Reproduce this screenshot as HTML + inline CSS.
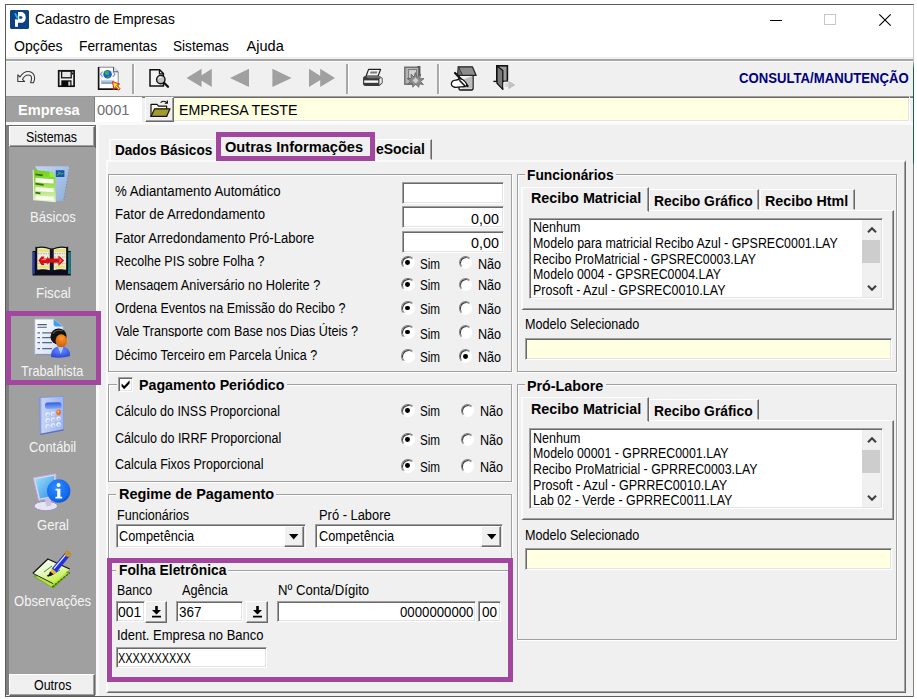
<!DOCTYPE html>
<html lang="pt-BR"><head><meta charset="utf-8"><title>Cadastro de Empresas</title>
<style>
html,body{margin:0;padding:0;background:#fff;}
#root{position:relative;width:917px;height:699px;overflow:hidden;background:#fff;font-family:"Liberation Sans",sans-serif;color:#000;font-size:13px}
#root div,#root span.t,#root svg{position:absolute;box-sizing:border-box}
.t{white-space:nowrap;transform-origin:0 0;display:block}
.clip{overflow:hidden}
.sunk{border:1px solid;border-color:#a0a0a0 #fff #fff #a0a0a0;box-shadow:inset 1px 1px 0 #696969,inset -1px -1px 0 #e3e3e3;background:#fff}
.sunk.y{background:#ffffe1}
.btn{border:1px solid;border-color:#fff #696969 #696969 #fff;box-shadow:inset -1px -1px 0 #a0a0a0;background:#f0f0f0}
.gb{border:1px solid #a0a0a0;box-shadow:1px 1px 0 #fff,inset 1px 1px 0 #fff}
.cap{background:#f0f0f0}
.purple{border:5px solid #a2469f}
.radio{border-radius:50%;background:#fff;border:1px solid;border-color:#808080 #fff #fff #808080;box-shadow:inset 1px 1px 0 #404040;transform:rotate(0deg)}
.radio.on::after{content:"";position:absolute;left:3.4px;top:3.4px;width:4.8px;height:4.8px;border-radius:50%;background:#000}
.tab{border:1px solid;border-color:#fff #696969 transparent #fff;box-shadow:inset -1px 0 0 #a0a0a0;background:#f0f0f0}

</style></head>
<body>
<div id="root">
<div style="left:5px;top:4px;width:909px;height:693px;border:1px solid #5c5c5c;border-right-color:#b9b9b9;background:#fff"></div>
<div style="left:913px;top:5px;width:1px;height:691px;background:linear-gradient(#c4c4c4 0,#c4c4c4 56px,#1c5c50 64px,#1c5c50 157px,#7c7c7c 160px,#7c7c7c 272px,#8c7c76 276px,#8c7c76 100%)"></div>
<div style="left:6px;top:57.4px;width:907px;height:638.6px;background:#f0f0f0"></div>
<div style="left:6px;top:59px;width:907px;height:1.9px;background:#a6a6a6"></div>
<div style="left:6px;top:60.9px;width:907px;height:1.2px;background:#fdfdfd"></div>
<svg style="left:10px;top:10px" width="19" height="19" viewBox="0 0 19 19"><path d="M1 0H18L19 1V18L18 19H1L0 18V1Z" fill="#0e4183"/><path d="M8 2H11C14.2 2 15.7 4.6 15.7 7.4C15.7 10.2 14.2 12.8 11 12.8H8V16.7H5V9.3H8Z M9.2 6.2H11.4C13 6.2 13 8.7 11.4 8.7H9.2Z" fill="#fff" fill-rule="evenodd"/><path d="M4.1 3.4L5.8 3L8.6 8L6.8 9Z" fill="#19b4f2"/><path d="M6.6 8.9L8 8.2V9.3H6.6Z" fill="#0a2f6a"/></svg>
<span id="t0" class="t" style="left:34.7px;top:12.03px;font-size:14.53px;line-height:14.53px;transform:scaleX(0.9412);">Cadastro de Empresas</span>
<div style="left:770px;top:20px;width:12px;height:1px;background:#000"></div>
<div style="left:824px;top:14px;width:12px;height:11px;border:1px solid #c8c8c8"></div>
<svg style="left:878px;top:13px" width="14" height="14" viewBox="0 0 14 14"><path d="M1.3 1.3L12.7 12.7M12.7 1.3L1.3 12.7" stroke="#000" stroke-width="1.15" fill="none"/></svg>
<span id="t1" class="t" style="left:14.2px;top:39.03px;font-size:14.53px;line-height:14.53px;transform:scaleX(0.9720);">Opções</span>
<span id="t2" class="t" style="left:79.1px;top:39.03px;font-size:14.53px;line-height:14.53px;transform:scaleX(0.9500);">Ferramentas</span>
<span id="t3" class="t" style="left:173.4px;top:39.03px;font-size:14.53px;line-height:14.53px;transform:scaleX(0.9367);">Sistemas</span>
<span id="t4" class="t" style="left:246.6px;top:39.03px;font-size:14.53px;line-height:14.53px;transform:scaleX(1.0000);">Ajuda</span>
<div style="left:132.1px;top:63.6px;width:2px;height:30.6px;background:#a8a8a8"></div>
<div style="left:134.1px;top:63.6px;width:1px;height:30.6px;background:#fdfdfd"></div>
<div style="left:346.1px;top:63.6px;width:2px;height:30.6px;background:#a8a8a8"></div>
<div style="left:348.1px;top:63.6px;width:1px;height:30.6px;background:#fdfdfd"></div>
<div style="left:437.1px;top:63.6px;width:2px;height:30.6px;background:#a8a8a8"></div>
<div style="left:439.1px;top:63.6px;width:1px;height:30.6px;background:#fdfdfd"></div>
<span id="t5" class="t" style="left:739.2px;top:72.03px;font-size:13.81px;line-height:13.81px;font-weight:bold;color:#000080;transform:scaleX(0.9528);">CONSULTA/MANUTENÇÃO</span>
<svg style="left:0;top:0" width="917" height="699" viewBox="0 0 917 699"><path d="M17.2 74.4V81.6H24.4L22.2 79.4C23.5 76.5 26 74.6 28.5 74.6C30.8 74.6 32 76.4 32 78.2C32 80 31.5 81.5 31 83H34C34.8 81.3 35.3 79.8 35.3 77.8C35.3 73.8 32.5 70.8 28.5 70.8C24.8 70.8 21.6 73.4 19.6 76.8Z" fill="#f6f6f6" stroke="#3a3a3a" stroke-width="1.2" stroke-linejoin="round" transform="translate(26 77.2) scale(.93) translate(-26 -77)"/><rect x="58.7" y="70.8" width="15.4" height="15.4" fill="#efefef" stroke="#111" stroke-width="1.7"/><rect x="61.6" y="71.2" width="9.6" height="6.6" fill="#e6e6e6" stroke="#111" stroke-width="1.3"/><rect x="61.3" y="80.3" width="10.2" height="6.2" fill="#0a0a0a"/><rect x="68.3" y="81.6" width="2" height="4" fill="#d8d8d8"/><rect x="72" y="72.5" width="1.2" height="2" fill="#111"/><path d="M98.6 67.2H113.5L118.2 71.8V88.6H98.6Z" fill="#fcfcfc" stroke="#8a8a8a" stroke-width="1"/><path d="M98.6 67V89.2H118.6" fill="none" stroke="#111" stroke-width="1.6"/><path d="M113.5 67.2V71.8H118.2" fill="#d8e4f4" stroke="#555" stroke-width="1"/><circle cx="107.6" cy="74.2" r="4.3" fill="#1f5fcf"/><path d="M104.6 72.4C105.6 70.6 107.6 70.2 109 71.2C108.4 72.8 109.8 73.6 108.8 75C107.6 74.4 106.2 75.6 105.4 74.6Z" fill="#37b24a"/><path d="M107.4 76.2C108.6 75.8 110.2 76.4 110.4 77.2C109.4 78.2 108 78.4 107 78Z" fill="#2e9c40"/><path d="M102.6 71.6L100.4 74.2L102.6 76.8M112.8 71.6L115 74.2L112.8 76.8" fill="none" stroke="#7f90e6" stroke-width="1.1"/><rect x="101.2" y="80.6" width="13" height="3.4" fill="#8ea8cc"/><rect x="101.2" y="80.6" width="13" height="1.2" fill="#b9c9e0"/><path d="M112.4 81.6L119.6 84L116.8 85.4L120.2 88.8L118.8 90.2L115.4 86.8L114 89.6Z" fill="#ffe21a" stroke="#d8261c" stroke-width="1" stroke-linejoin="round"/><path d="M150 69.8H159.6L163.4 73.6V86H150Z" fill="#f4f4f4" stroke="#111" stroke-width="1.5" stroke-linejoin="miter"/><path d="M159.4 70V73.8H163.2" fill="none" stroke="#111" stroke-width="1.2"/><circle cx="160.8" cy="79.6" r="4.2" fill="#c4c4c4" stroke="#111" stroke-width="1.4"/><path d="M158.6 78.6A2.4 2.4 0 0 1 161.6 77.2" fill="none" stroke="#fff" stroke-width="1"/><path d="M164 82.8L168 86.8" stroke="#111" stroke-width="2.3" stroke-linecap="round"/><path d="M186.6 78L201.6 68.8V86.9Z M197.4 78L211.8 68.8V86.9Z" fill="#a0a0a0"/><path d="M230 78L249 68.8V86.9Z" fill="#a0a0a0"/><path d="M291.6 78L272.4 68.8V86.9Z" fill="#a0a0a0"/><path d="M323.6 78L309 68.8V86.9Z M335 78L320.2 68.8V86.9Z" fill="#a0a0a0"/><path d="M368.6 69.4H380.6L378 76.2H366Z" fill="#f4f4f4" stroke="#222" stroke-width="1.2" stroke-linejoin="round"/><path d="M370.6 71.4H377.4L376.7 73.4H369.9Z" fill="#7a7a7a"/><path d="M365.4 76H379.4L382.6 78.2V83L379.4 86H365.4C364 86 363 85 363 83.6V78.4C363 77 364 76 365.4 76Z" fill="#3a3a3a"/><path d="M364.2 80.4H378.2V82.8H364.2Z" fill="#fdfdfd"/><path d="M379.4 78.8L381.8 77.4V82.6L379.4 85Z" fill="#e8e8e8"/><path d="M365.4 76H379.4L382.6 78.2H368Z" fill="#6e6e6e"/><rect x="404.8" y="67.2" width="14" height="17" fill="#b4b4b4" stroke="#6a6a6a" stroke-width="1.4"/><rect x="408.6" y="69.6" width="8" height="9" fill="#d4d4d4" stroke="#7a7a7a" stroke-width="1"/><path d="M417.4 66.8H419.6V76" stroke="#555" stroke-width="1.6" fill="none"/><path d="M415.4 72.6L417 77.4L420.6 74.2L419.8 78.8L424 78.6L420.6 81.4L423.4 84.6L419.2 83.8L418.8 87.2L415.6 84.2L412.8 87.2L412.2 83.2L408 84.4L410.6 80.8L407.2 78.6L411.4 78.2L411 74.2L414 77Z" fill="#8f8f8f" stroke="#5e5e5e" stroke-width=".8"/><path d="M412.6 80.4L415.6 77.4L418.4 80.6L415.8 83.6Z" fill="#d0d0d0"/><path d="M459 74.6H473V88.4C473 89.4 472.4 90 471.4 90H460.6C459.6 90 459 89.4 459 88.4Z" fill="#f2f2f2" stroke="#111" stroke-width="1.4"/><path d="M462 80L472.4 76V88.6H462Z" fill="#bcbcbc"/><path d="M458.2 66.8H472.4L476.2 75.4H462.4Z" fill="#8c8c8c" stroke="#222" stroke-width="1.2" stroke-linejoin="round"/><path d="M458.2 66.8L457.4 75.4L462.4 75.4" fill="#6a6a6a" stroke="#222" stroke-width="1"/><path d="M455 73L467.6 86" stroke="#111" stroke-width="2.2" stroke-linecap="round"/><path d="M452.4 81.2C454 79.6 457 80.4 458.6 79.4C460.6 78.4 463 79.4 464.8 81.4C466.4 83 467.6 85 466 86.2C463.6 87.4 459.6 86.6 457.4 87.2C455 87.8 451.6 86.8 451.4 84.4C451.2 83 451.4 82.2 452.4 81.2Z" fill="#fff" stroke="#111" stroke-width="1.3"/><path d="M459.4 80.2L465 86" stroke="#111" stroke-width="1.6"/><rect x="496.8" y="65.8" width="10.6" height="15.6" fill="#9a9a9a" stroke="#111" stroke-width="1.6"/><path d="M497 66L502.8 70.6V89.4L497 83.2Z" fill="#7a7a7a" stroke="#111" stroke-width="1.3" stroke-linejoin="round"/><path d="M493.4 81.4H497.2" stroke="#111" stroke-width="1.4"/><path d="M504 82.2H508.4V80.6L515.6 85L508.4 89.6V87.8H504Z" fill="#dcdcdc" stroke="#fafafa" stroke-width="1"/><path d="M508.4 80.6L515.6 85L508.4 89.6" fill="#c2c2c2"/></svg>
<div style="left:6px;top:95.6px;width:907px;height:2px;background:linear-gradient(#a0a0a0,#6e6e6e)"></div>
<div style="left:6px;top:97px;width:88px;height:25px;background:#a0a0a0"></div>
<span id="t6" class="t" style="left:17.6px;top:103.03px;font-size:14.39px;line-height:14.39px;font-weight:bold;color:#fff;transform:scaleX(1.0148);">Empresa</span>
<div style="left:94px;top:97px;width:48px;height:25px;background:#fff;border-left:1px solid #808080"></div>
<span id="t7" class="t" style="left:96.6px;top:103.03px;font-size:14.53px;line-height:14.53px;color:#6d6d78;transform:scaleX(1.0063);">0001</span>
<div class="sunk y" style="left:171px;top:95.6px;width:738.6px;height:26.6px;"></div>
<div class="btn" style="left:145px;top:97px;width:29px;height:25px;"></div>
<svg style="left:0;top:0" width="917" height="699" viewBox="0 0 917 699"><path d="M151 104.4H157L158.6 106.2H166.6V116.4H151Z" fill="#fdfde8" stroke="#111" stroke-width="1.2" stroke-linejoin="round"/><path d="M151 116.4L154.6 108.8H170L166.6 116.4Z" fill="#a39a2a" stroke="#111" stroke-width="1.2" stroke-linejoin="round"/><path d="M160.6 102.6C162.6 100.8 165.4 100.8 167.2 102.8M167.4 100.6V103.2H164.8" fill="none" stroke="#111" stroke-width="1.1"/></svg>
<span id="t8" class="t" style="left:179.0px;top:104.02px;font-size:13.95px;line-height:13.95px;transform:scaleX(1.0224);">EMPRESA TESTE</span>
<div style="left:6px;top:122px;width:907px;height:3px;background:#fafafa"></div>
<div style="left:6px;top:125px;width:90px;height:570px;background:#a0a0a0;border-left:3px solid #808080;border-top:1px solid #696969"></div>
<div style="left:95px;top:125px;width:1px;height:23px;background:#696969"></div>
<div style="left:96px;top:125px;width:3px;height:571px;background:#fafafa"></div>
<div class="btn" style="left:9px;top:126px;width:86px;height:21px;"></div>
<span id="t9" class="t" style="left:26.3px;top:130.02px;font-size:14.97px;line-height:14.97px;transform:scaleX(0.8290);">Sistemas</span>
<div class="btn" style="left:9px;top:674px;width:86px;height:22px;"></div>
<span id="t10" class="t" style="left:34.2px;top:677.03px;font-size:15.41px;line-height:15.41px;transform:scaleX(0.8087);">Outros</span>
<span id="t11" class="t" style="left:29.7px;top:209.03px;font-size:15.41px;line-height:15.41px;color:#f4f4f4;transform:scaleX(0.8500);">Básicos</span>
<span id="t12" class="t" style="left:35.6px;top:285.03px;font-size:15.41px;line-height:15.41px;color:#f4f4f4;transform:scaleX(0.8650);">Fiscal</span>
<span id="t13" class="t" style="left:21.2px;top:363.03px;font-size:15.41px;line-height:15.41px;color:#f4f4f4;transform:scaleX(0.8224);">Trabalhista</span>
<span id="t14" class="t" style="left:28.5px;top:439.03px;font-size:15.41px;line-height:15.41px;color:#f4f4f4;transform:scaleX(0.8351);">Contábil</span>
<span id="t15" class="t" style="left:36.8px;top:517.03px;font-size:15.41px;line-height:15.41px;color:#f4f4f4;transform:scaleX(0.8500);">Geral</span>
<span id="t16" class="t" style="left:14.3px;top:593.03px;font-size:15.41px;line-height:15.41px;color:#f4f4f4;transform:scaleX(0.8484);">Observações</span>
<svg style="left:0;top:0" width="917" height="699" viewBox="0 0 917 699"><defs>
<linearGradient id="gGreen" x1="0" y1="0" x2="0" y2="1"><stop offset="0" stop-color="#6fd019"/><stop offset=".45" stop-color="#9be04a"/><stop offset="1" stop-color="#e6f6cf"/></linearGradient>
<linearGradient id="gBlueSheet" x1="0" y1="0" x2="1" y2="1"><stop offset="0" stop-color="#c2d6f0"/><stop offset="1" stop-color="#8eaedb"/></linearGradient>
<linearGradient id="gDoc" x1="0" y1="0" x2="1" y2="1"><stop offset="0" stop-color="#ffffff"/><stop offset="1" stop-color="#cfdcf6"/></linearGradient>
<linearGradient id="gCalc" x1="0" y1="0" x2="1" y2="0"><stop offset="0" stop-color="#6f8fe0"/><stop offset=".12" stop-color="#c4d2f6"/><stop offset="1" stop-color="#9db3ee"/></linearGradient>
<linearGradient id="gDisp" x1="0" y1="0" x2="0" y2="1"><stop offset="0" stop-color="#2f62e0"/><stop offset="1" stop-color="#86a8f4"/></linearGradient>
<linearGradient id="gScreen" x1="0" y1="0" x2="1" y2="1"><stop offset="0" stop-color="#9fe0fa"/><stop offset="1" stop-color="#2f8fe6"/></linearGradient>
<radialGradient id="gInfo" cx=".4" cy=".35" r=".7"><stop offset="0" stop-color="#2f8cff"/><stop offset=".8" stop-color="#0f68ee"/><stop offset="1" stop-color="#0a4fc4"/></radialGradient>
<radialGradient id="gFace" cx=".55" cy=".3" r=".8"><stop offset="0" stop-color="#ff9a2a"/><stop offset="1" stop-color="#c2500a"/></radialGradient>
<radialGradient id="gBody" cx=".5" cy=".3" r=".8"><stop offset="0" stop-color="#6f8cff"/><stop offset="1" stop-color="#2140d8"/></radialGradient>
<linearGradient id="gPaper" x1="0" y1="0" x2=".6" y2="1"><stop offset="0" stop-color="#ffffff"/><stop offset=".55" stop-color="#e6f7c4"/><stop offset="1" stop-color="#c4ee2a"/></linearGradient>
</defs><path d="M35 166.2H69.7L63.6 200.9H56Z" fill="url(#gBlueSheet)"/><path d="M69.7 166.2L63.6 200.9" stroke="#7d8fa8" stroke-width="1" stroke-dasharray="1.5 1.5"/><rect x="55.8" y="170.2" width="8.6" height="6.8" fill="#1c4fb4"/><path d="M57 175.6C58.4 173 59.4 175 60.6 172.2M60.4 174.4L63.4 173.2M58.2 171.8L59.6 173.6" stroke="#39b24a" stroke-width="1.1" fill="none"/><path d="M33.2 169.8L49.6 171.8C53 172.6 55 174.6 55.2 177.6L55.8 202.3L33.8 200.2Z" fill="url(#gGreen)"/><path d="M49.6 171.8C53 172.6 55 174.6 55.2 177.6C53.4 176.6 51 176.6 49.4 177Z" fill="#8ff23a"/><path d="M33.2 169.8L33.8 200.2" stroke="#eaf6dc" stroke-width="1"/><rect x="35.6" y="178.2" width="18" height="4.2" fill="#fbfff4" transform="skewY(4) translate(0,-2.6)"/><rect x="35.6" y="187" width="18" height="4" fill="#f6fcec" transform="skewY(4) translate(0,-2.6)"/><rect x="35.6" y="195.6" width="18" height="4" fill="#f8fcf0" transform="skewY(4) translate(0,-2.6)"/><path d="M35.4 174.4L42.8 175.4M35.4 183.6L43.6 184.8M35.4 192.6L40.4 193.4" stroke="#3c6a14" stroke-width="1.7"/><path d="M32.6 251H70.8V275.6H32.6Z" fill="#0c0c1c"/><rect x="32.6" y="252" width="2.2" height="22" fill="#2b3fa6"/><rect x="68" y="252" width="2.8" height="22" fill="#1f7c84"/><path d="M35.4 246.4L37 247.4V270.4H35.4Z M68.2 246.2L66.6 247.4V270.4H68.2Z" fill="#111"/><path d="M36.6 247.6C41 246.8 46 247 50.4 249V271C46 269.6 41 269.6 36.6 270.4Z" fill="#ecebdc" stroke="#111" stroke-width="1.3"/><path d="M66.8 247.6C62.4 246.8 57.4 247 53 249V271C57.4 269.6 62.4 269.6 66.8 270.4Z" fill="#ecebdc" stroke="#111" stroke-width="1.3"/><path d="M38 250.6H49M38 267H49M54.4 250.6H65.4M54.4 267H65.4" stroke="#e9e56c" stroke-width="2.6"/><path d="M38 253.6H49M54.4 253.6H65.4M54.4 257H65.4M54.4 263.6H65.4M38 263.6H49" stroke="#a8a8b8" stroke-width=".9" stroke-dasharray="1.5 1"/><path d="M50.2 248.4H53.2V271.6H50.2Z" fill="#14142a"/><path d="M38.4 260.6L41.4 256.4H44.4L43.4 258.4H47.2V256.6L49 258.6H58.4V255.4L64.2 260.6L58.4 266V262.8H49L47.2 264.8V263H43.4L44.4 265H41.4Z" fill="#d41010"/><path d="M59.4 258V263.4L62 260.6Z" fill="#ff6a50"/><path d="M41.6 259.6H46" stroke="#ff8c78" stroke-width="1"/><path d="M35 319.2H53.6L62.9 326.4V354.2H35Z" fill="url(#gDoc)" stroke="#c4cde4" stroke-width=".8"/><path d="M35.6 354.6H62.6" stroke="#8a93ac" stroke-width="1.2"/><path d="M53.6 319.2L62.9 326.4H56C54.4 326.4 53.6 325.6 53.6 324Z" fill="#3c9ff2"/><path d="M37.5 324.6H46.8M37.5 327.2H46.8" stroke="#4c5d7c" stroke-width="1.1"/><path d="M37.5 332.8H40M42.2 332.8H52M37.5 337.6H40M42.2 337.6H52M37.5 342.6H40M42.2 342.6H52M37.5 348.6H40M42.2 348.6H52" stroke="#56678a" stroke-width="1.3"/><path d="M51.2 357C50.6 351.6 53 348 57.6 346.6H63.6C68.2 348 70.6 351.6 70 356C64 358 57 358 51.2 357Z" fill="url(#gBody)"/><path d="M57.8 346.6L60.8 354L63.6 346.6Z" fill="#a8d4ff"/><circle cx="58.6" cy="336.6" r="8.1" fill="#121212"/><path d="M53 333.6C55 330.6 59 329.6 62.4 330.8" stroke="#5a5a5a" stroke-width="1.2" fill="none"/><ellipse cx="61.2" cy="340.8" rx="5.7" ry="6.5" fill="url(#gFace)"/><path d="M66.6 336.6C67.8 337.6 67.8 341 66.8 342.4" stroke="#f0a040" stroke-width="1" fill="none"/><path d="M39.3 397.6L63.6 396.4V429.8L40.4 434.4Z" fill="url(#gCalc)" stroke="#7f96d8" stroke-width=".8" stroke-linejoin="round"/><path d="M40.4 434.4L63.6 429.8" stroke="#5a70b8" stroke-width="1.2"/><rect x="45" y="402.4" width="16.6" height="6.4" rx="2.6" fill="url(#gDisp)" transform="rotate(-2 53 405)"/><circle cx="47.6" cy="414.6" r="2.3" fill="#e4ecfc"/><circle cx="48.1" cy="415.3" r="1.4" fill="#b4c6f2"/><circle cx="53" cy="413.70000000000005" r="2.3" fill="#e4ecfc"/><circle cx="53.5" cy="414.40000000000003" r="1.4" fill="#b4c6f2"/><ellipse cx="58.6" cy="412.40000000000003" rx="2.3" ry="2.8" fill="#ec7412"/><ellipse cx="58.2" cy="411.6" rx="1" ry="1.1" fill="#ffb878"/><circle cx="47.6" cy="420.4" r="2.3" fill="#e4ecfc"/><circle cx="48.1" cy="421.09999999999997" r="1.4" fill="#b4c6f2"/><circle cx="53" cy="419.5" r="2.3" fill="#e4ecfc"/><circle cx="53.5" cy="420.2" r="1.4" fill="#b4c6f2"/><circle cx="58.6" cy="418.59999999999997" r="2.3" fill="#e4ecfc"/><circle cx="59.1" cy="419.29999999999995" r="1.4" fill="#b4c6f2"/><circle cx="47.6" cy="426.2" r="2.3" fill="#e4ecfc"/><circle cx="48.1" cy="426.9" r="1.4" fill="#b4c6f2"/><circle cx="53" cy="425.3" r="2.3" fill="#e4ecfc"/><circle cx="53.5" cy="426.0" r="1.4" fill="#b4c6f2"/><circle cx="58.6" cy="424.4" r="2.3" fill="#e4ecfc"/><circle cx="59.1" cy="425.09999999999997" r="1.4" fill="#b4c6f2"/><ellipse cx="45.8" cy="506" rx="11.8" ry="4.7" fill="#e6e6ee" stroke="#9a92c8" stroke-width="1"/><path d="M44 497L50 495.6L51.6 505.6L46.6 506.6Z" fill="#c9c2ea"/><path d="M33.2 477.8L55.8 473.8L56.6 497L38.6 500.4Z" fill="#dcd6f2" stroke="#b4acd8" stroke-width=".8" stroke-linejoin="round"/><path d="M35.4 479.2L54.2 475.8L54.9 495.6L39.9 498.4Z" fill="url(#gScreen)"/><circle cx="58.7" cy="491" r="11.7" fill="url(#gInfo)"/><circle cx="58.6" cy="485" r="2" fill="#fff"/><path d="M55.6 488.8H60.4V496.8H62.2V498.6H55.4V496.8H57.2V490.6H55.6Z" fill="#fff"/><path d="M33.6 576.4L48 562L69.8 572.6L53.6 588.4Z" fill="#6aa81c"/><path d="M36 577L48 565L68 573.6L52 587Z" fill="#b4e24a"/><path d="M52 587L69.8 572.6" stroke="#3c6c08" stroke-width="1.4" stroke-dasharray="2.4 1.2"/><path d="M32.9 573.3L47.9 559L69.7 569L53.3 583.7Z" fill="url(#gPaper)"/><path d="M32.9 573.3L47.9 559L69.7 569" fill="none" stroke="#111" stroke-width="1.2" stroke-linejoin="round"/><path d="M32.9 573.3L53.3 583.7" stroke="#2c2c1c" stroke-width="1"/><path d="M44 572L52 566M50 576L60 570" stroke="#4c8a2a" stroke-width="1"/><path d="M51.8 568.6L65.6 552.2L70 555.8L56.4 572.4Z" fill="#2230e2"/><path d="M54 568.6L66.6 553.6" stroke="#e8ecff" stroke-width="1.3"/><path d="M51.8 568.6L56.4 572.4L49.4 575.4Z" fill="#f0b428"/><path d="M49.4 575.4L50.4 572.6L52.2 574.2Z M47.4 576L50.6 574.4" fill="#111" stroke="#111" stroke-width="1.6"/><ellipse cx="67.8" cy="554" rx="2.9" ry="2.4" fill="#d8a01a" stroke="#b8860e" stroke-width=".8" transform="rotate(38 67.8 554)"/><ellipse cx="68" cy="553.8" rx="1.3" ry="1" fill="#8a8a9c" transform="rotate(38 68 553.8)"/></svg>
<div class="purple" style="left:6px;top:311px;width:95px;height:74px;"></div>
<div style="left:106.2px;top:159.6px;width:799.8px;height:533.4px;border:1px solid;border-width:2px 1px 1px 2px;border-color:#fbfbfb #696969 #696969 #fbfbfb;box-shadow:inset -1px -1px 0 #a0a0a0;background:#f0f0f0"></div>
<div style="left:109px;top:139px;width:108px;height:21px;border:1px solid;border-width:1px 1px 1px 2px;border-color:#fff transparent transparent #fbfbfb;background:#f0f0f0"></div>
<div class="tab" style="left:376px;top:139px;width:56px;height:21px;"></div>
<div style="left:218px;top:135px;width:156px;height:26px;background:#f0f0f0"></div>
<span id="t17" class="t" style="left:115.2px;top:143.02px;font-size:14.24px;line-height:14.24px;font-weight:bold;transform:scaleX(0.9529);">Dados Básicos</span>
<span id="t18" class="t" style="left:225.0px;top:140.02px;font-size:14.24px;line-height:14.24px;font-weight:bold;transform:scaleX(1.0269);">Outras Informações</span>
<span id="t19" class="t" style="left:376.2px;top:142.02px;font-size:14.24px;line-height:14.24px;font-weight:bold;transform:scaleX(0.9800);">eSocial</span>
<div class="purple" style="left:216px;top:132px;width:159px;height:29px;"></div>
<div class="gb" style="left:108.4px;top:173.6px;width:403.8px;height:198.8px;"></div>
<span id="t20" class="t" style="left:115.0px;top:184.03px;font-size:14.0px;line-height:14.0px;transform:scaleX(0.9463);">% Adiantamento Automático</span>
<span id="t21" class="t" style="left:115.0px;top:207.03px;font-size:14.0px;line-height:14.0px;transform:scaleX(0.9400);">Fator de Arredondamento</span>
<span id="t22" class="t" style="left:115.0px;top:231.03px;font-size:14.0px;line-height:14.0px;transform:scaleX(0.9313);">Fator Arredondamento Pró-Labore</span>
<span id="t23" class="t" style="left:115.0px;top:254.03px;font-size:14.0px;line-height:14.0px;transform:scaleX(0.8928);">Recolhe PIS sobre Folha ?</span>
<div class="clip" style="left:0;top:0;width:917px;height:290.6px"><span id="t24" class="t" style="left:115.0px;top:278.03px;font-size:14.0px;line-height:14.0px;transform:scaleX(0.9097);">Mensagem Aniversário no Holerite ?</span></div>
<span id="t25" class="t" style="left:115.0px;top:301.03px;font-size:14.0px;line-height:14.0px;transform:scaleX(0.8973);">Ordena Eventos na Emissão do Recibo ?</span>
<div class="clip" style="left:0;top:0;width:917px;height:336.6px"><span id="t26" class="t" style="left:115.0px;top:324.03px;font-size:14.0px;line-height:14.0px;transform:scaleX(0.9011);">Vale Transporte com Base nos Dias Úteis ?</span></div>
<span id="t27" class="t" style="left:115.0px;top:348.03px;font-size:14.0px;line-height:14.0px;transform:scaleX(0.8907);">Décimo Terceiro em Parcela Única ?</span>
<div class="sunk" style="left:402px;top:182.3px;width:102px;height:22.2px;"></div>
<div class="sunk" style="left:402px;top:206.3px;width:102px;height:22.2px;"></div>
<div class="sunk" style="left:402px;top:230.5px;width:102px;height:22.5px;"></div>
<span id="t28" class="t" style="left:471.3px;top:212.03px;font-size:14.0px;line-height:14.0px;transform:scaleX(1.0222);">0,00</span>
<span id="t29" class="t" style="left:471.3px;top:236.03px;font-size:14.0px;line-height:14.0px;transform:scaleX(1.0222);">0,00</span>
<div class="radio on" style="left:401px;top:255.8px;width:13.6px;height:13.6px;"></div>
<div class="radio" style="left:458.5px;top:255.8px;width:13.6px;height:13.6px;"></div>
<span id="t30" class="t" style="left:419.6px;top:257.03px;font-size:14.0px;line-height:14.0px;transform:scaleX(0.8333);">Sim</span>
<span id="t31" class="t" style="left:477.6px;top:257.03px;font-size:14.0px;line-height:14.0px;transform:scaleX(0.9000);">Não</span>
<div class="radio on" style="left:401px;top:277.5px;width:13.6px;height:13.6px;"></div>
<div class="radio" style="left:458.5px;top:277.5px;width:13.6px;height:13.6px;"></div>
<span id="t32" class="t" style="left:419.6px;top:278.03px;font-size:14.0px;line-height:14.0px;transform:scaleX(0.8333);">Sim</span>
<span id="t33" class="t" style="left:477.6px;top:278.03px;font-size:14.0px;line-height:14.0px;transform:scaleX(0.9000);">Não</span>
<div class="radio on" style="left:401px;top:301.3px;width:13.6px;height:13.6px;"></div>
<div class="radio" style="left:458.5px;top:301.3px;width:13.6px;height:13.6px;"></div>
<span id="t34" class="t" style="left:419.6px;top:302.03px;font-size:14.0px;line-height:14.0px;transform:scaleX(0.8333);">Sim</span>
<span id="t35" class="t" style="left:477.6px;top:302.03px;font-size:14.0px;line-height:14.0px;transform:scaleX(0.9000);">Não</span>
<div class="radio on" style="left:401px;top:325.3px;width:13.6px;height:13.6px;"></div>
<div class="radio" style="left:458.5px;top:325.3px;width:13.6px;height:13.6px;"></div>
<span id="t36" class="t" style="left:419.6px;top:327.03px;font-size:14.0px;line-height:14.0px;transform:scaleX(0.8333);">Sim</span>
<span id="t37" class="t" style="left:477.6px;top:327.03px;font-size:14.0px;line-height:14.0px;transform:scaleX(0.9000);">Não</span>
<div class="radio" style="left:401px;top:349.4px;width:13.6px;height:13.6px;"></div>
<div class="radio on" style="left:458.5px;top:349.4px;width:13.6px;height:13.6px;"></div>
<span id="t38" class="t" style="left:419.6px;top:350.03px;font-size:14.0px;line-height:14.0px;transform:scaleX(0.8333);">Sim</span>
<span id="t39" class="t" style="left:477.6px;top:350.03px;font-size:14.0px;line-height:14.0px;transform:scaleX(0.9000);">Não</span>
<div class="gb" style="left:108.4px;top:383.9px;width:403.8px;height:98.2px;"></div>
<div class="cap" style="left:117px;top:377px;width:170px;height:16px;"></div>
<div class="sunk" style="left:118px;top:377px;width:15px;height:15px;"></div>
<svg style="left:120px;top:379px" width="11" height="11" viewBox="0 0 11 11"><path d="M1.6 4.4L4.2 7L9.6 1.2V4.4L4.2 10.2L1.6 7.6z" fill="#000"/></svg>
<span id="t40" class="t" style="left:139.1px;top:378.03px;font-size:14.0px;line-height:14.0px;font-weight:bold;transform:scaleX(1.0161);">Pagamento Periódico</span>
<span id="t41" class="t" style="left:114.6px;top:404.03px;font-size:14.0px;line-height:14.0px;transform:scaleX(0.8908);">Cálculo do INSS Proporcional</span>
<span id="t42" class="t" style="left:114.6px;top:431.03px;font-size:14.0px;line-height:14.0px;transform:scaleX(0.8978);">Cálculo do IRRF Proporcional</span>
<span id="t43" class="t" style="left:114.6px;top:457.03px;font-size:14.0px;line-height:14.0px;transform:scaleX(0.8922);">Calcula Fixos Proporcional</span>
<div class="radio on" style="left:401px;top:403.8px;width:13.6px;height:13.6px;"></div>
<div class="radio" style="left:460.5px;top:403.8px;width:13.6px;height:13.6px;"></div>
<span id="t44" class="t" style="left:419.6px;top:404.03px;font-size:14.0px;line-height:14.0px;transform:scaleX(0.8333);">Sim</span>
<span id="t45" class="t" style="left:479.6px;top:404.03px;font-size:14.0px;line-height:14.0px;transform:scaleX(0.9000);">Não</span>
<div class="radio on" style="left:401px;top:432.8px;width:13.6px;height:13.6px;"></div>
<div class="radio" style="left:460.5px;top:432.8px;width:13.6px;height:13.6px;"></div>
<span id="t46" class="t" style="left:419.6px;top:433.03px;font-size:14.0px;line-height:14.0px;transform:scaleX(0.8333);">Sim</span>
<span id="t47" class="t" style="left:479.6px;top:433.03px;font-size:14.0px;line-height:14.0px;transform:scaleX(0.9000);">Não</span>
<div class="radio on" style="left:401px;top:459.09999999999997px;width:13.6px;height:13.6px;"></div>
<div class="radio" style="left:460.5px;top:459.09999999999997px;width:13.6px;height:13.6px;"></div>
<span id="t48" class="t" style="left:419.6px;top:460.03px;font-size:14.0px;line-height:14.0px;transform:scaleX(0.8333);">Sim</span>
<span id="t49" class="t" style="left:479.6px;top:460.03px;font-size:14.0px;line-height:14.0px;transform:scaleX(0.9000);">Não</span>
<div class="gb" style="left:108.4px;top:493.5px;width:403.8px;height:66px;"></div>
<div class="cap" style="left:116px;top:487px;width:160px;height:14px;"></div>
<span id="t50" class="t" style="left:118.6px;top:487.03px;font-size:14.0px;line-height:14.0px;font-weight:bold;transform:scaleX(1.0333);">Regime de Pagamento</span>
<span id="t51" class="t" style="left:116.6px;top:508.03px;font-size:14.0px;line-height:14.0px;transform:scaleX(0.9000);">Funcionários</span>
<span id="t52" class="t" style="left:318.6px;top:508.03px;font-size:14.0px;line-height:14.0px;transform:scaleX(0.9205);">Pró - Labore</span>
<div class="sunk" style="left:115.8px;top:524.2px;width:190.2px;height:24.2px;"></div>
<div class="btn" style="left:284.0px;top:526.3px;width:20.2px;height:20.3px;"></div>
<svg style="left:289.4px;top:534px" width="9.4" height="5.6" viewBox="0 0 9.4 5.6"><path d="M0 0H9.4L4.7 5.6z" fill="#000"/></svg>
<div class="sunk" style="left:315.3px;top:524.2px;width:188px;height:24.2px;"></div>
<div class="btn" style="left:481.3px;top:526.3px;width:20.2px;height:20.3px;"></div>
<svg style="left:486.7px;top:534px" width="9.4" height="5.6" viewBox="0 0 9.4 5.6"><path d="M0 0H9.4L4.7 5.6z" fill="#000"/></svg>
<span id="t53" class="t" style="left:119.0px;top:529.03px;font-size:14.0px;line-height:14.0px;transform:scaleX(0.9108);">Competência</span>
<span id="t54" class="t" style="left:318.6px;top:529.03px;font-size:14.0px;line-height:14.0px;transform:scaleX(0.9108);">Competência</span>
<div class="gb" style="left:108.4px;top:569.5px;width:403.8px;height:108.3px;"></div>
<div class="cap" style="left:116px;top:563px;width:112px;height:14px;"></div>
<span id="t55" class="t" style="left:118.6px;top:563.03px;font-size:14.0px;line-height:14.0px;font-weight:bold;transform:scaleX(0.9853);">Folha Eletrônica</span>
<span id="t56" class="t" style="left:116.6px;top:583.03px;font-size:14.0px;line-height:14.0px;transform:scaleX(0.8850);">Banco</span>
<span id="t57" class="t" style="left:181.8px;top:583.03px;font-size:14.0px;line-height:14.0px;transform:scaleX(0.9059);">Agência</span>
<span id="t58" class="t" style="left:277.6px;top:583.03px;font-size:14.0px;line-height:14.0px;transform:scaleX(0.9402);">Nº Conta/Dígito</span>
<div class="sunk" style="left:116px;top:601px;width:29px;height:21px;"></div>
<div class="btn" style="left:145px;top:601px;width:22px;height:22px;"></div>
<div class="sunk" style="left:176px;top:601px;width:67px;height:21px;"></div>
<div class="btn" style="left:246px;top:601px;width:22px;height:22px;"></div>
<div class="sunk" style="left:277px;top:601px;width:199px;height:21px;"></div>
<div class="sunk" style="left:477.5px;top:601px;width:23px;height:21px;"></div>
<svg style="left:150.5px;top:605.6px" width="11" height="12" viewBox="0 0 11 12"><path d="M4.2 0H6.8V4H10L5.5 8.6L1 4H4.2z M1 9.8H10V11.4H1z" fill="#000"/></svg>
<svg style="left:251.5px;top:605.6px" width="11" height="12" viewBox="0 0 11 12"><path d="M4.2 0H6.8V4H10L5.5 8.6L1 4H4.2z M1 9.8H10V11.4H1z" fill="#000"/></svg>
<span id="t59" class="t" style="left:117.8px;top:605.03px;font-size:14.0px;line-height:14.0px;transform:scaleX(0.9957);">001</span>
<span id="t60" class="t" style="left:178.8px;top:605.03px;font-size:14.0px;line-height:14.0px;transform:scaleX(0.9609);">367</span>
<span id="t61" class="t" style="left:400.0px;top:605.03px;font-size:14.0px;line-height:14.0px;transform:scaleX(0.9436);">0000000000</span>
<span id="t62" class="t" style="left:482.0px;top:605.03px;font-size:14.0px;line-height:14.0px;transform:scaleX(0.9688);">00</span>
<span id="t63" class="t" style="left:116.6px;top:628.03px;font-size:14.0px;line-height:14.0px;transform:scaleX(0.9272);">Ident. Empresa no Banco</span>
<div class="sunk" style="left:116px;top:647px;width:151px;height:21px;"></div>
<span id="t64" class="t" style="left:117.8px;top:651.03px;font-size:14.0px;line-height:14.0px;transform:scaleX(0.7806);">XXXXXXXXXX</span>
<div class="purple" style="left:107px;top:558px;width:406px;height:124px;"></div>
<div class="gb" style="left:516.8px;top:173.6px;width:380.2px;height:198.8px;"></div>
<div class="cap" style="left:525px;top:168px;width:90.89999999999998px;height:14px;"></div>
<span id="t65" class="t" style="left:527.3px;top:168.03px;font-size:14.0px;line-height:14.0px;font-weight:bold;transform:scaleX(0.9852);">Funcionários</span>
<div style="left:521px;top:210px;width:373px;height:99.6px;border:1px solid;border-width:1px 1px 1px 2px;border-color:#fff #696969 #696969 #fbfbfb;box-shadow:inset -1px -1px 0 #a0a0a0;background:#f0f0f0"></div>
<div style="left:521px;top:186.8px;width:128px;height:25.2px;border:1px solid;border-width:1px 1px 1px 2px;border-color:#fff #696969 transparent #fbfbfb;box-shadow:inset -1px 0 0 #a0a0a0;background:#f0f0f0"></div>
<span id="t66" class="t" style="left:531.0px;top:191.02px;font-size:14.24px;line-height:14.24px;font-weight:bold;transform:scaleX(1.0092);">Recibo Matricial</span>
<div class="tab" style="left:649px;top:189px;width:110px;height:21px;"></div>
<span id="t67" class="t" style="left:653.8px;top:194.02px;font-size:14.24px;line-height:14.24px;font-weight:bold;transform:scaleX(0.9743);">Recibo Gráfico</span>
<div class="tab" style="left:760px;top:189px;width:95px;height:21px;"></div>
<span id="t68" class="t" style="left:765.3px;top:194.02px;font-size:14.24px;line-height:14.24px;font-weight:bold;transform:scaleX(1.0024);">Recibo Html</span>
<div class="sunk" style="left:529px;top:217.5px;width:354px;height:81.5px;"></div>
<div style="left:862px;top:219.5px;width:19px;height:77.5px;background:#f0f0f0"></div>
<div style="left:862.3px;top:240px;width:18px;height:22.6px;background:#cdcdcd"></div>
<svg style="left:867px;top:227px" width="10" height="6" viewBox="0 0 10 6"><path d="M1 5.2L5 1.2L9 5.2" stroke="#404040" stroke-width="2.1" fill="none"/></svg>
<svg style="left:867px;top:285px" width="10" height="6" viewBox="0 0 10 6"><path d="M1 0.8L5 4.8L9 0.8" stroke="#404040" stroke-width="2.1" fill="none"/></svg>
<span id="t69" class="t" style="left:532.8px;top:220.03px;font-size:14.0px;line-height:14.0px;transform:scaleX(0.8962);">Nenhum</span>
<span id="t70" class="t" style="left:532.8px;top:236.03px;font-size:14.0px;line-height:14.0px;transform:scaleX(0.8866);">Modelo para matricial Recibo Azul - GPSREC0001.LAY</span>
<span id="t71" class="t" style="left:532.8px;top:252.03px;font-size:14.0px;line-height:14.0px;transform:scaleX(0.8802);">Recibo ProMatricial - GPSREC0003.LAY</span>
<span id="t72" class="t" style="left:532.8px;top:267.03px;font-size:14.0px;line-height:14.0px;transform:scaleX(0.8826);">Modelo 0004 - GPSREC0004.LAY</span>
<span id="t73" class="t" style="left:532.8px;top:283.03px;font-size:14.0px;line-height:14.0px;transform:scaleX(0.8944);">Prosoft - Azul - GPSREC0010.LAY</span>
<span id="t74" class="t" style="left:525.3px;top:317.03px;font-size:14.0px;line-height:14.0px;transform:scaleX(0.9016);">Modelo Selecionado</span>
<div class="sunk y" style="left:525px;top:337.5px;width:367px;height:22px;"></div>
<div class="gb" style="left:516.8px;top:383.9px;width:380.2px;height:256.6px;"></div>
<div class="cap" style="left:525px;top:378.3px;width:80.79999999999995px;height:14px;"></div>
<span id="t75" class="t" style="left:527.3px;top:379.03px;font-size:14.0px;line-height:14.0px;font-weight:bold;transform:scaleX(1.0213);">Pró-Labore</span>
<div style="left:521px;top:420.3px;width:373px;height:99.6px;border:1px solid;border-width:1px 1px 1px 2px;border-color:#fff #696969 #696969 #fbfbfb;box-shadow:inset -1px -1px 0 #a0a0a0;background:#f0f0f0"></div>
<div style="left:521px;top:397.1px;width:128px;height:25.2px;border:1px solid;border-width:1px 1px 1px 2px;border-color:#fff #696969 transparent #fbfbfb;box-shadow:inset -1px 0 0 #a0a0a0;background:#f0f0f0"></div>
<span id="t76" class="t" style="left:531.0px;top:402.02px;font-size:14.24px;line-height:14.24px;font-weight:bold;transform:scaleX(1.0092);">Recibo Matricial</span>
<div class="tab" style="left:649px;top:399.3px;width:110px;height:21px;"></div>
<span id="t77" class="t" style="left:653.8px;top:404.02px;font-size:14.24px;line-height:14.24px;font-weight:bold;transform:scaleX(0.9743);">Recibo Gráfico</span>
<div class="sunk" style="left:529px;top:427.8px;width:354px;height:81.5px;"></div>
<div style="left:862px;top:429.8px;width:19px;height:77.5px;background:#f0f0f0"></div>
<div style="left:862.3px;top:450.3px;width:18px;height:22.6px;background:#cdcdcd"></div>
<svg style="left:867px;top:437.3px" width="10" height="6" viewBox="0 0 10 6"><path d="M1 5.2L5 1.2L9 5.2" stroke="#404040" stroke-width="2.1" fill="none"/></svg>
<svg style="left:867px;top:495.3px" width="10" height="6" viewBox="0 0 10 6"><path d="M1 0.8L5 4.8L9 0.8" stroke="#404040" stroke-width="2.1" fill="none"/></svg>
<span id="t78" class="t" style="left:532.8px;top:431.03px;font-size:14.0px;line-height:14.0px;transform:scaleX(0.8962);">Nenhum</span>
<span id="t79" class="t" style="left:532.8px;top:446.03px;font-size:14.0px;line-height:14.0px;transform:scaleX(0.8829);">Modelo 00001 - GPRREC0001.LAY</span>
<span id="t80" class="t" style="left:532.8px;top:462.03px;font-size:14.0px;line-height:14.0px;transform:scaleX(0.8831);">Recibo ProMatricial - GPRREC0003.LAY</span>
<span id="t81" class="t" style="left:532.8px;top:478.03px;font-size:14.0px;line-height:14.0px;transform:scaleX(0.8981);">Prosoft - Azul - GPRREC0010.LAY</span>
<span id="t82" class="t" style="left:532.8px;top:493.03px;font-size:14.0px;line-height:14.0px;transform:scaleX(0.8920);">Lab 02 - Verde - GPRREC0011.LAY</span>
<span id="t83" class="t" style="left:525.3px;top:528.03px;font-size:14.0px;line-height:14.0px;transform:scaleX(0.9016);">Modelo Selecionado</span>
<div class="sunk y" style="left:525px;top:547.8px;width:367px;height:22px;"></div>
</div>
</body></html>
